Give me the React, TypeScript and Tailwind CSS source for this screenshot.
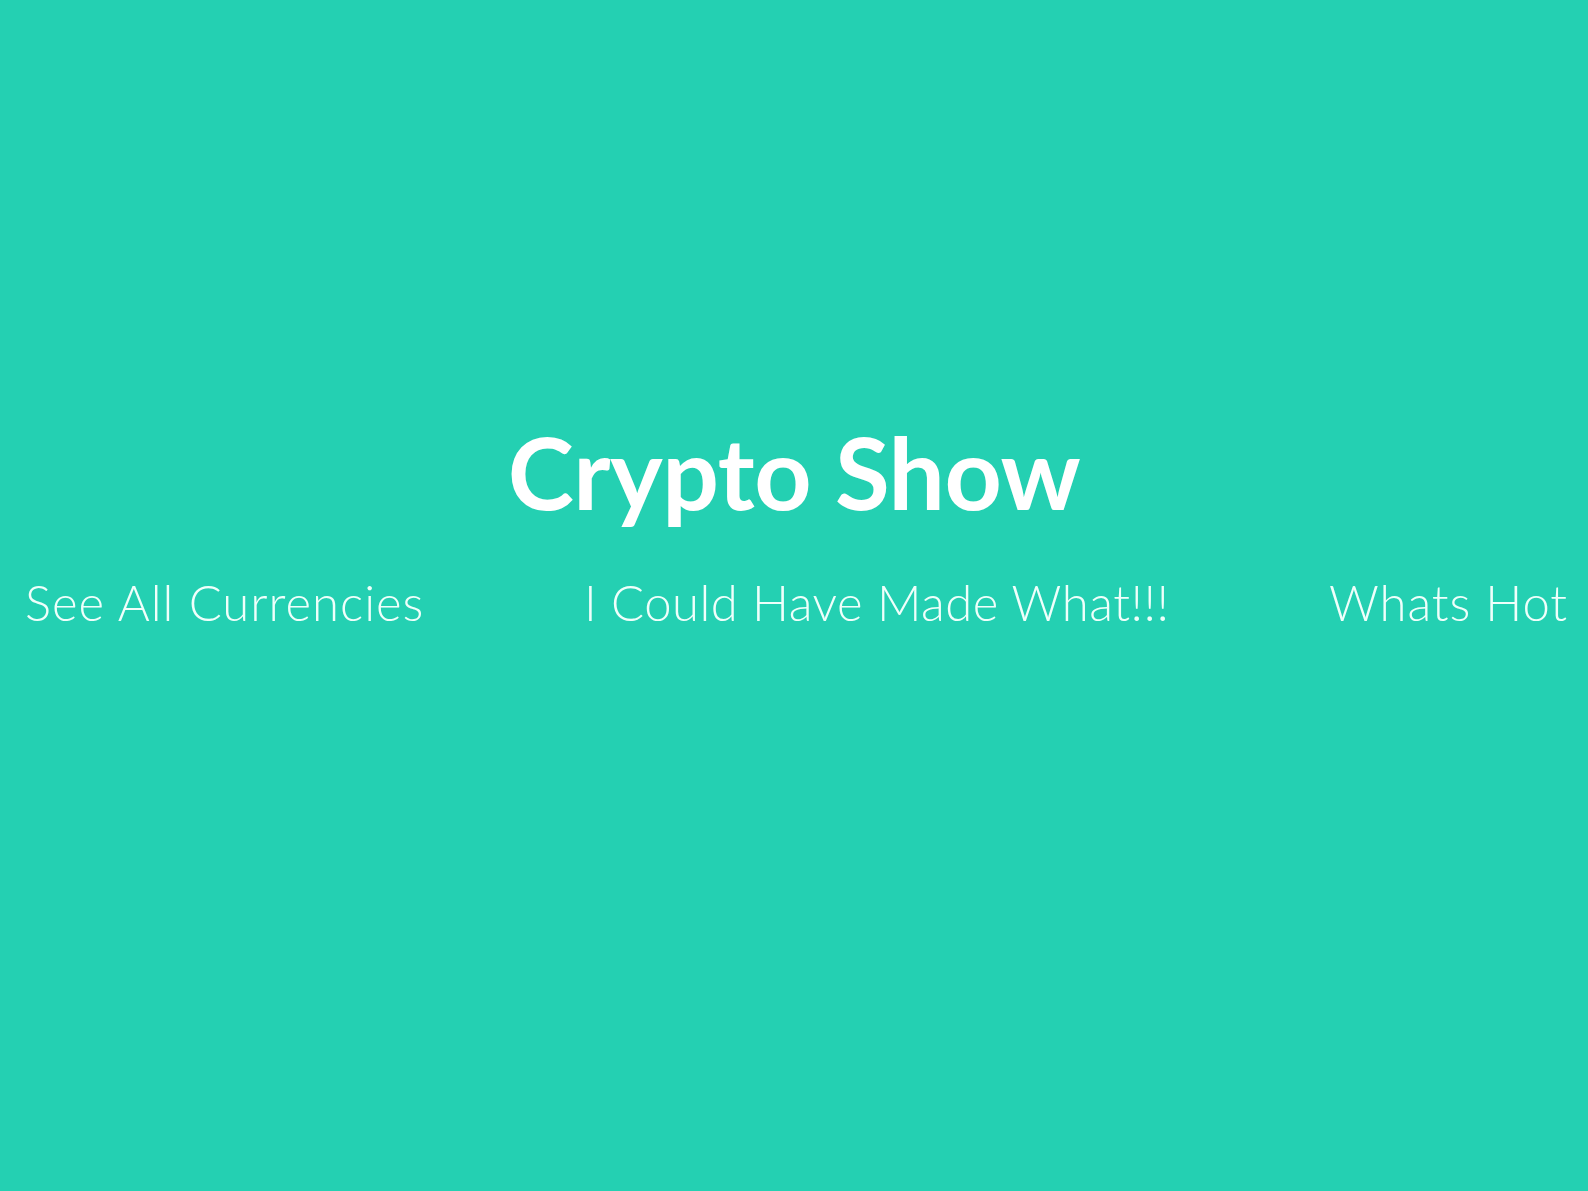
const links = [
  { label: "See All Currencies", track: "tracking-[1px]" },
  { label: "I Could Have Made What!!!", track: "tracking-[0.5px]" },
  { label: "Whats Hot", track: "tracking-[0.9px]" },
];

const App = () => {
  return (
    <div className="min-h-screen h-[1191px] bg-[#24d0b2] text-white flex flex-col font-['Lato',sans-serif]">
      <header className="pt-[411px]">
        <h1 className="text-center text-[100px] leading-[120px] font-bold tracking-[-0.5px]">
          Crypto Show
        </h1>
        <nav className="mt-[41px] flex justify-between pl-[25px] pr-[20px]">
          {links.map((link) => (
            <a
              key={link.label}
              href="#"
              className={`text-[49px] leading-[60px] text-[#effffb] font-light ${link.track}`}
            >
              {link.label}
            </a>
          ))}
        </nav>
      </header>
    </div>
  );
};

export default App;
